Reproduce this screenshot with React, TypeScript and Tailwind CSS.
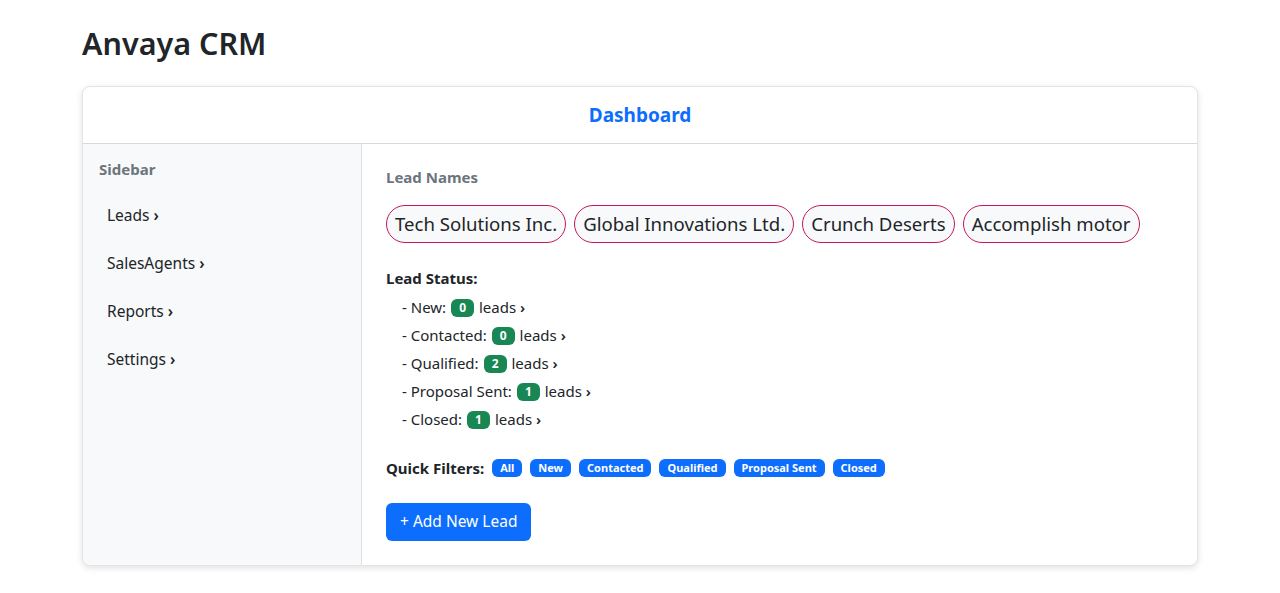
import React from "react";

const leadNames = [
  "Tech Solutions Inc.",
  "Global Innovations Ltd.",
  "Crunch Deserts",
  "Accomplish motor",
];

const statuses = [
  { label: "New", count: 0 },
  { label: "Contacted", count: 0 },
  { label: "Qualified", count: 2 },
  { label: "Proposal Sent", count: 1 },
  { label: "Closed", count: 1 },
];

const filters = ["All", "New", "Contacted", "Qualified", "Proposal Sent", "Closed"];

const navItems = ["Leads", "SalesAgents", "Reports", "Settings"];

const App = () => {
  return (
    <div
      className="min-h-screen bg-white text-[#212529]"
      style={{ fontFamily: '"Noto Sans", "Open Sans", sans-serif' }}
    >
      <div className="mx-auto w-[1140px] px-3">
        <h1 className="pt-[24px] pb-[22px] text-[30.5px] font-semibold leading-[1.3]">Anvaya CRM</h1>

        <div className="overflow-hidden rounded-lg border border-[#e3e4e8] bg-white shadow-[0_2px_6px_rgba(0,0,0,0.12)]">
          {/* header */}
          <div className="flex h-[57px] items-center justify-center border-b border-[#d8d9dc] pt-[2px]">
            <h2 className="text-[19px] font-bold text-[#0d6efd]">Dashboard</h2>
          </div>

          <div className="flex">
            {/* sidebar */}
            <aside className="w-[279px] shrink-0 border-r border-[#dee2e6] bg-[#f8f9fa] p-4">
              <h6 className="mb-[16px] text-[15px] font-bold leading-[19px] text-[#6c757d]">Sidebar</h6>
              <ul className="flex flex-col gap-2">
                {navItems.map((item) => (
                  <li key={item} className="px-2 py-2 text-[15.5px] leading-6 text-[#212529]">
                    {item} <span className="font-semibold">›</span>
                  </li>
                ))}
              </ul>
            </aside>

            {/* main */}
            <main className="flex-1 p-6">
              <h6 className="mb-[18px] text-[15px] font-bold leading-[19px] text-[#6c757d]">Lead Names</h6>
              <div className="mb-[23px] flex flex-wrap gap-2">
                {leadNames.map((name) => (
                  <span
                    key={name}
                    className="flex h-[38px] items-center rounded-full border border-[#c2185b] bg-[#f8f9fa] px-2 text-[18.6px] text-[#212529]"
                  >
                    {name}
                  </span>
                ))}
              </div>

              <p className="mb-[4px] text-[15px] font-bold leading-6">Lead Status:</p>
              <ul className="mb-[22px] pl-4">
                {statuses.map((s) => (
                  <li key={s.label} className="flex h-[28px] items-center gap-[5px] text-[15px]">
                    <span>- {s.label}:</span>
                    <span className="rounded-md bg-[#198754] px-[8px] py-[1px] text-[12px] font-bold leading-[16px] text-white">
                      {s.count}
                    </span>
                    <span>
                      leads <span className="font-semibold">›</span>
                    </span>
                  </li>
                ))}
              </ul>

              <div className="mb-[23px] flex items-center gap-2">
                <span className="text-[15px] font-bold leading-6">Quick Filters:</span>
                {filters.map((f) => (
                  <span
                    key={f}
                    className="rounded-md bg-[#0d6efd] px-2 py-[2px] text-[11px] font-bold leading-[14px] text-white"
                  >
                    {f}
                  </span>
                ))}
              </div>

              <button className="h-[38px] rounded-md bg-[#0d6efd] px-[14px] text-[15.5px] text-white">
                + Add New Lead
              </button>
            </main>
          </div>
        </div>
      </div>
    </div>
  );
};

export default App;
